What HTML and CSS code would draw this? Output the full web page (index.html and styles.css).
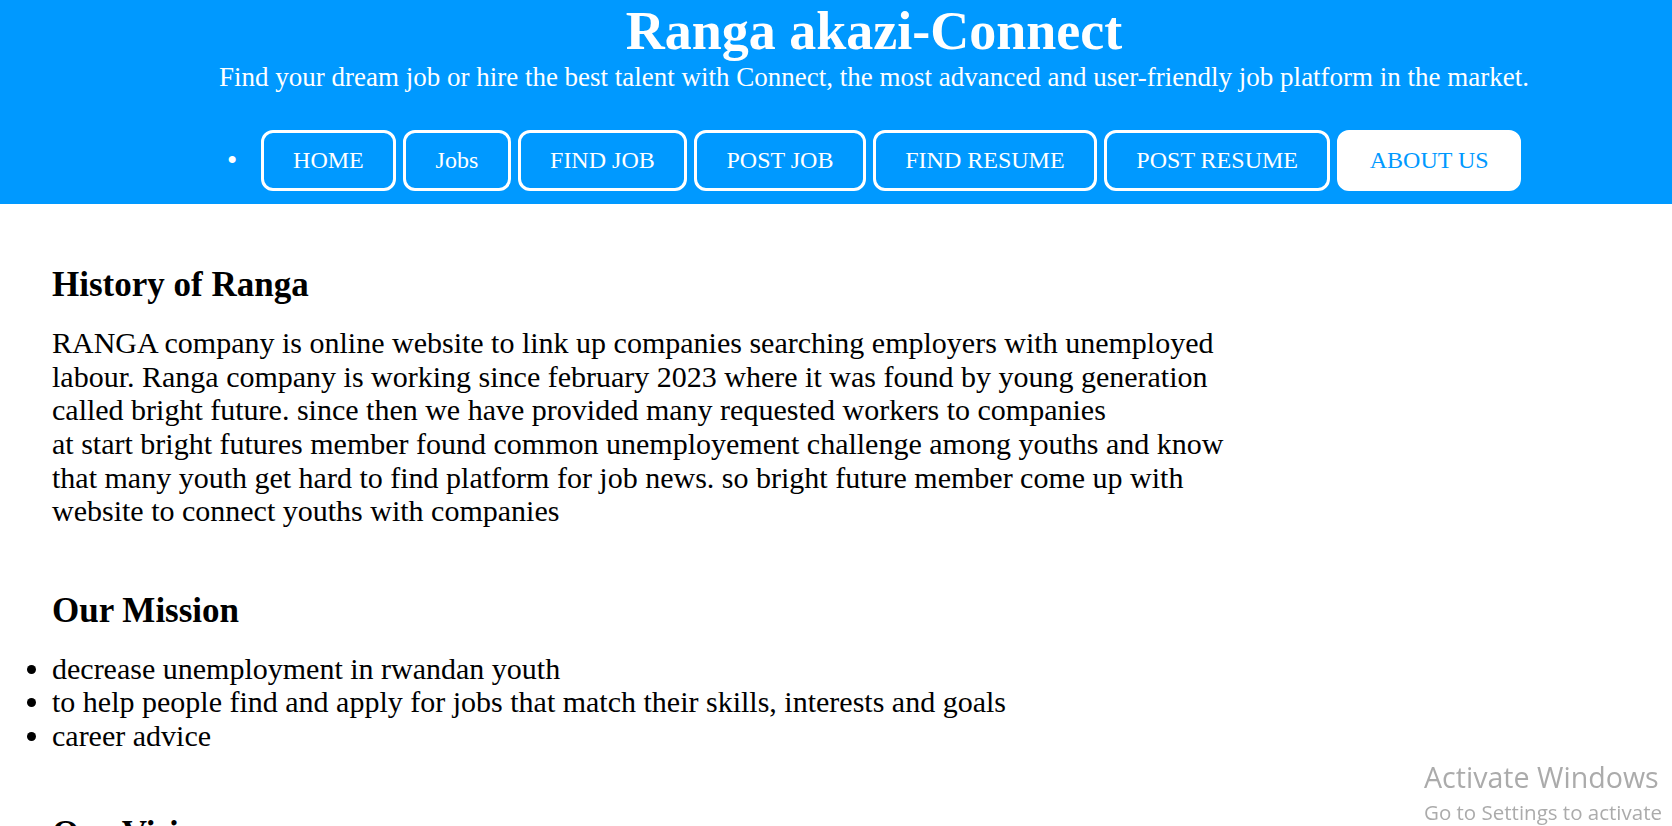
FILE: index.html
```html
<!DOCTYPE html>
<html lang="en">
<head>
<meta charset="utf-8">
<title>Ranga akazi-Connect — About us</title>
<link rel="stylesheet" href="styles.css">
</head>
<body>
<header class="top">
  <h1 class="title">Ranga akazi-Connect</h1>
  <p class="tagline">Find your dream job or hire the best talent with Connect, the most advanced and user-friendly job platform in the market.</p>
  <nav class="menu">
    <span class="dot">•</span>
    <a class="btn" href="#">HOME</a>
    <a class="btn" href="#">Jobs</a>
    <a class="btn" href="#">FIND JOB</a>
    <a class="btn" href="#">POST JOB</a>
    <a class="btn" href="#">FIND RESUME</a>
    <a class="btn" href="#">POST RESUME</a>
    <a class="btn btn-active" href="#">ABOUT US</a>
  </nav>
</header>

<main class="content">
  <section class="block">
    <h2 class="block-title">History of Ranga</h2>
    <p class="text">RANGA company is online website to link up companies searching employers with unemployed labour. Ranga company is working since february 2023 where it was found by young generation called bright future. since then we have provided many requested workers to companies<br>at start bright futures member found common unemployement challenge among youths and know that many youth get hard to find platform for job news. so bright future member come up with website to connect youths with companies</p>
  </section>

  <section class="block">
    <h2 class="block-title">Our Mission</h2>
    <ul class="list">
      <li>decrease unemployment in rwandan youth</li>
      <li>to help people find and apply for jobs that match their skills, interests and goals</li>
      <li>career advice</li>
    </ul>
  </section>

  <section class="block block-last">
    <h2 class="block-title">Our Vision</h2>
  </section>
</main>

<div class="watermark">
  <div class="wm-big">Activate Windows</div>
  <div class="wm-small">Go to Settings to activate</div>
</div>
</body>
</html>
```

FILE: styles.css
```css
html, body {
  margin: 0;
  padding: 0;
  background: #ffffff;
}

body {
  font-family: "Liberation Serif", "Times New Roman", serif;
  color: #000000;
  overflow: hidden;
}

/* ---------- header ---------- */
.top {
  background: #0099ff;
  color: #ffffff;
  text-align: center;
  padding: 0 0 13px 76px;
}

.title {
  margin: 0;
  font-size: 54px;
  font-weight: bold;
  line-height: normal;
}

.tagline {
  margin: 0;
  font-size: 27px;
  line-height: normal;
}

.menu {
  margin-top: 36.6px;
  display: flex;
  justify-content: center;
  align-items: center;
  gap: 7px;
  font-size: 29.33px;
}

.dot {
  color: #ffffff;
  margin-right: 16.5px;
  line-height: normal;
}

.btn {
  display: block;
  font-size: 24px;
  line-height: normal;
  color: #ffffff;
  text-decoration: none;
  border: 3px solid #ffffff;
  border-radius: 12px;
  padding: 14px 29.4px;
}

.btn-active {
  background: #ffffff;
  color: #0099ff;
}

/* ---------- content ---------- */
.content {
  padding: 61px 52px 0 52px;
  max-width: 1200px;
}

.block-title {
  margin: 0 0 21.6px 0;
  font-size: 35px;
  font-weight: bold;
  line-height: normal;
}

.text {
  margin: 0;
  font-size: 30px;
  line-height: 33.6px;
}

.block + .block {
  margin-top: 62.8px;
}

.block + .block-last {
  margin-top: 62.5px;
}

.list {
  margin: 0;
  padding: 0;
  font-size: 30px;
  line-height: 33.2px;
  list-style: disc outside;
}

/* ---------- OS watermark overlay ---------- */
.watermark {
  position: fixed;
  left: 1424px;
  top: 758px;
  white-space: nowrap;
  font-family: "Open Sans", "Noto Sans", sans-serif;
  color: rgba(150, 150, 150, 0.8);
  pointer-events: none;
}

.wm-big {
  font-size: 28.6px;
  line-height: 37px;
}

.wm-small {
  font-size: 20.5px;
  line-height: 28px;
  margin-top: 3px;
}
```
